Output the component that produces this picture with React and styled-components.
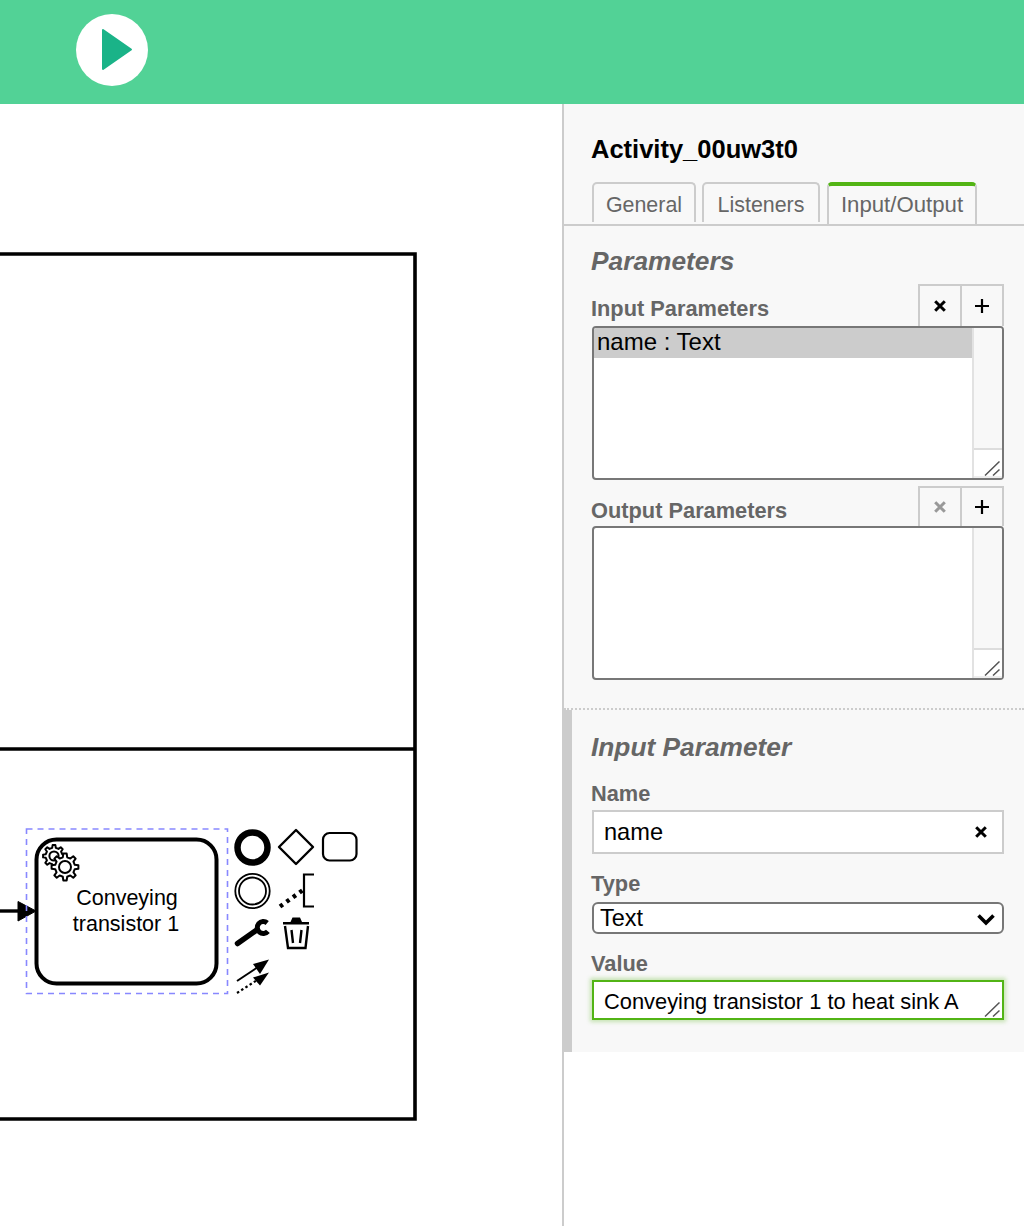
import React from "react";
import styled, { createGlobalStyle } from "styled-components";

const Global = createGlobalStyle`
  html, body { margin: 0; padding: 0; background: #fff; }
  body { font-family: "Liberation Sans", Arial, sans-serif; overflow: hidden; }
  * { box-sizing: border-box; }
`;

const Page = styled.div`
  width: 1024px;
  height: 1226px;
  display: flex;
  flex-direction: column;
  overflow: hidden;
`;

const TopBar = styled.header`
  height: 104px;
  flex: none;
  background: #52d296;
  display: flex;
  align-items: center;
  padding: 0 0 4px 76px;
`;

const PlayButton = styled.button`
  width: 72px;
  height: 72px;
  border: 0;
  padding: 0 0 0 9px;
  border-radius: 50%;
  background: #fff;
  display: flex;
  align-items: center;
  justify-content: center;
`;

const Main = styled.div`
  flex: 1;
  display: flex;
  min-height: 0;
`;

const Canvas = styled.main`
  width: 562px;
  flex: none;
  background: #fff;
`;

const DiagramSvg = styled.svg`
  display: block;
  width: 562px;
  height: 1122px;
`;

const Panel = styled.aside`
  flex: 1;
  border-left: 2px solid #ccc;
  background: #fff;
`;

const PanelBody = styled.div`
  background: #f8f8f8;
`;

const PanelHeader = styled.div`
  padding-top: 30px;
`;

const Title = styled.div`
  margin-left: 27px;
  font-size: 25.5px;
  line-height: 30px;
  font-weight: 700;
  color: #000;
`;

const Tabs = styled.nav`
  margin-top: 18px;
  height: 44px;
  padding-left: 28px;
  display: flex;
  align-items: flex-start;
  gap: 6px;
  border-bottom: 2px solid #ccc;
`;

const Tab = styled.div`
  height: ${(p) => (p.$active ? "42px" : "40px")};
  width: ${(p) => p.$w}px;
  margin-left: ${(p) => (p.$active ? "1px" : "0")};
  border: 2px solid #ccc;
  border-top: ${(p) => (p.$active ? "4px solid #52b415" : "2px solid #ccc")};
  border-bottom: 0;
  border-radius: 5px 5px 0 0;
  display: flex;
  align-items: center;
  justify-content: center;
  padding: ${(p) => (p.$active ? "0 0 1px" : "4px 0 0")};
  font-size: ${(p) => (p.$active ? "22.2px" : "21.4px")};
  color: #666;
`;

const Group = styled.section`
  padding: 20px 20px 28px 28px;
  border-bottom: 2px dotted #ccc;
`;

const GroupHeading = styled.h2`
  margin: 0 0 0 -1px;
  font-size: 26.3px;
  line-height: 30px;
  font-weight: 700;
  font-style: italic;
  color: #666;
`;

const ListField = styled.div`
  margin-top: ${(p) => p.$top}px;
`;

const ListHeader = styled.div`
  display: flex;
  align-items: flex-end;
  justify-content: space-between;
`;

const Label = styled.label`
  display: block;
  margin-left: -1px;
  font-size: 21.8px;
  line-height: 26px;
  font-weight: 700;
  color: #666;
`;

const ListLabel = styled(Label)`
  margin-bottom: ${(p) => p.$gap}px;
`;

const ButtonPair = styled.div`
  display: flex;
`;

const IconButton = styled.button`
  width: 44px;
  height: ${(p) => p.$h}px;
  padding: 0;
  margin-left: ${(p) => (p.$first ? "0" : "-2px")};
  background: #f8f8f8;
  border: 2px solid #ccc;
  border-bottom: 0;
  display: flex;
  align-items: center;
  justify-content: center;
  color: ${(p) => (p.$muted ? "#999" : "#000")};
`;

const ListBox = styled.div`
  height: 154px;
  border: 2px solid #777;
  border-radius: 4px;
  background: #fff;
  display: flex;
  overflow: hidden;
`;

const Rows = styled.div`
  flex: 1;
  min-width: 0;
`;

const Row = styled.div`
  height: 30px;
  padding-left: 3px;
  font-size: 24px;
  line-height: 28px;
  color: #000;
  background: #ccc;
`;

const ScrollTrack = styled.div`
  width: 30px;
  flex: none;
  background: #f8f8f8;
  border-left: 2px solid #e2e2e2;
  display: flex;
  flex-direction: column;
  justify-content: flex-end;
`;

const ResizeCorner = styled.div`
  height: 30px;
  background: #fff;
  border-top: 2px solid #ddd;
  border-bottom: 2px solid #eee;
  display: flex;
  align-items: flex-end;
  justify-content: flex-end;
  padding: 0 2px 0 0;
`;

const DetailGroup = styled.section`
  border-left: 8px solid #ccc;
  padding: 22px 20px 32px 20px;
`;

const DetailHeading = styled(GroupHeading)``;

const FieldLabel = styled(Label)`
  margin-top: ${(p) => p.$top}px;
  margin-bottom: ${(p) => p.$bottom}px;
`;

const TextWrap = styled.div`
  position: relative;
`;

const NameInput = styled.input`
  display: block;
  width: 100%;
  height: 44px;
  border: 2px solid #ccc;
  background: #fff;
  padding: 0 40px 0 10px;
  font: 23.6px "Liberation Sans", Arial, sans-serif;
  color: #000;
  outline: none;
  border-radius: 0;
`;

const ClearIcon = styled.span`
  position: absolute;
  right: 17px;
  top: 16px;
  display: flex;
`;

const TypeSelect = styled.select`
  display: block;
  width: 100%;
  height: 32px;
  border: 2px solid #777;
  border-radius: 6px;
  background: #fff;
  padding: 0 30px 0 6px;
  font: 23.5px "Liberation Sans", Arial, sans-serif;
  color: #000;
  appearance: none;
  outline: none;
`;

const Chevron = styled.svg`
  position: absolute;
  right: 8px;
  top: 11px;
  pointer-events: none;
`;

const ValueBox = styled.textarea`
  display: block;
  width: 100%;
  height: 40px;
  border: 2px solid #52b415;
  box-shadow: 0 0 4px 2px rgba(82, 180, 21, 0.3);
  background: #fff;
  padding: 6px 30px 0 10px;
  font: 21.85px/27px "Liberation Sans", Arial, sans-serif;
  color: #000;
  outline: none;
  resize: none;
  overflow: hidden;
  border-radius: 0;
`;

const HandleSlot = styled.span`
  position: absolute;
  right: 4px;
  bottom: 3px;
  display: flex;
`;

function Handle() {
  return (
    <svg width="16" height="15" viewBox="0 0 16 15">
      <path d="M1 14.5 L15.5 0.5 M9 14.5 L15.5 8.5" stroke="#555" strokeWidth="1.5" fill="none" />
    </svg>
  );
}

function CrossIcon() {
  return (
    <svg width="12" height="12" viewBox="0 0 12 12">
      <path d="M1.2 1.2 L10.8 10.8 M10.8 1.2 L1.2 10.8" stroke="currentColor" strokeWidth="3" fill="none" />
    </svg>
  );
}

function PlusIcon() {
  return (
    <svg width="14" height="14" viewBox="0 0 14 14">
      <path d="M7 0 V14 M0 7 H14" stroke="currentColor" strokeWidth="2.2" fill="none" />
    </svg>
  );
}

function gearPath(cx, cy, outer, root, teeth) {
  const pts = [];
  const step = (Math.PI * 2) / teeth;
  for (let i = 0; i < teeth; i++) {
    const a = i * step - Math.PI / 2;
    const w = step * 0.2;
    const p = (r, t) => `${(cx + r * Math.cos(t)).toFixed(2)} ${(cy + r * Math.sin(t)).toFixed(2)}`;
    pts.push(p(root, a - w * 1.4), p(outer, a - w * 0.8), p(outer, a + w * 0.8), p(root, a + w * 1.4));
  }
  return `M${pts.join(" L")} Z`;
}

function Diagram() {
  return (
    <DiagramSvg viewBox="0 104 562 1122">
      <g fill="none" stroke="#000">
        <path d="M-10 254 H415 V1119 H-10" strokeWidth="3.6" />
        <path d="M-10 749 H415" strokeWidth="3.6" />
        <path d="M-10 911 H22" strokeWidth="3.4" />
      </g>
      <path d="M18 901.5 L36 911 L18 921 Z" fill="#000" stroke="#000" strokeWidth="1" />
      <rect x="26.5" y="829" width="201" height="164.5" fill="none" stroke="#8888ff" strokeWidth="1.6" strokeDasharray="6 5" />
      <rect x="36.5" y="839.5" width="180" height="144" rx="20" fill="#fff" stroke="#000" strokeWidth="4" />
      <path d={gearPath(54, 856, 11, 8.4, 8)} fill="#fff" stroke="#000" strokeWidth="2" strokeLinejoin="round" />
      <circle cx="54" cy="856" r="4.6" fill="#fff" stroke="#000" strokeWidth="2" />
      <path d={gearPath(65, 867, 13.5, 10, 8)} fill="#fff" stroke="#000" strokeWidth="2" strokeLinejoin="round" />
      <circle cx="65" cy="867" r="6" fill="#fff" stroke="#000" strokeWidth="2" />
      <text x="127" y="905" textAnchor="middle" fontFamily="'Liberation Sans', Arial, sans-serif" fontSize="21.5" fill="#000">Conveying</text>
      <text x="126" y="931" textAnchor="middle" fontFamily="'Liberation Sans', Arial, sans-serif" fontSize="21.5" fill="#000">transistor 1</text>

      <circle cx="252.5" cy="847.5" r="15" fill="none" stroke="#000" strokeWidth="6.5" />
      <path d="M296 830 L313 847 L296 864 L279 847 Z" fill="none" stroke="#000" strokeWidth="2.4" strokeLinejoin="round" />
      <rect x="323" y="833" width="33.5" height="27.5" rx="6.5" fill="none" stroke="#000" strokeWidth="2.2" />
      <circle cx="252.5" cy="891" r="17.2" fill="none" stroke="#000" strokeWidth="1.8" />
      <circle cx="252.5" cy="891" r="13.5" fill="none" stroke="#000" strokeWidth="1.8" />
      <path d="M280 906.5 L303 890" fill="none" stroke="#000" strokeWidth="4.4" strokeDasharray="3.5 4.5" />
      <path d="M314 874.5 H304 V906.5 H314" fill="none" stroke="#000" strokeWidth="2.2" />
      <path d="M237.5 943.5 L256 930.5" fill="none" stroke="#000" strokeWidth="5.5" strokeLinecap="round" />
      <path d="M267.2 923 A6 6 0 1 0 267.9 931.4" fill="none" stroke="#000" strokeWidth="5" />
      <path d="M290.5 922 L292.5 917.5 H300 L302 922 H309 V924.5 H283 V922 Z" fill="#000" />
      <path d="M285 926 L288 948 H305.5 L308 926" fill="none" stroke="#000" strokeWidth="2.4" />
      <path d="M291.5 930 L293 943 M301.5 930 L300 943" fill="none" stroke="#000" strokeWidth="2.4" />
      <path d="M237 981 L258 967" fill="none" stroke="#000" strokeWidth="2" />
      <path d="M269 959.5 L253 964 L260 974 Z" fill="#000" />
      <path d="M237 993 L258 979.5" fill="none" stroke="#000" strokeWidth="2.2" strokeDasharray="2.5 2.5" />
      <path d="M269 972.5 L253 977.5 L260 985.5 Z" fill="#000" />
    </DiagramSvg>
  );
}

function ParamList({ label, top, buttonHeight, labelGap, muted, children }) {
  return (
    <ListField $top={top}>
      <ListHeader>
        <ListLabel $gap={labelGap}>{label}</ListLabel>
        <ButtonPair>
          <IconButton $first $h={buttonHeight} $muted={muted} aria-label="Remove">
            <CrossIcon />
          </IconButton>
          <IconButton $h={buttonHeight} aria-label="Add">
            <PlusIcon />
          </IconButton>
        </ButtonPair>
      </ListHeader>
      <ListBox>
        <Rows>{children}</Rows>
        <ScrollTrack>
          <ResizeCorner>
            <Handle />
          </ResizeCorner>
        </ScrollTrack>
      </ListBox>
    </ListField>
  );
}

export default function App() {
  return (
    <>
      <Global />
      <Page>
        <TopBar>
          <PlayButton aria-label="Run">
            <svg width="32" height="44" viewBox="0 0 32 44">
              <path d="M2 2 L30 21.5 L2 41 Z" fill="#1ab388" stroke="#1ab388" strokeWidth="2" strokeLinejoin="round" />
            </svg>
          </PlayButton>
        </TopBar>
        <Main>
          <Canvas>
            <Diagram />
          </Canvas>
          <Panel>
            <PanelBody>
              <PanelHeader>
                <Title>Activity_00uw3t0</Title>
                <Tabs>
                  <Tab $w={104}>General</Tab>
                  <Tab $w={118}>Listeners</Tab>
                  <Tab $w={150} $active>Input/Output</Tab>
                </Tabs>
              </PanelHeader>
              <Group>
                <GroupHeading>Parameters</GroupHeading>
                <ParamList label="Input Parameters" top={8} buttonHeight={42} labelGap={4}>
                  <Row>name : Text</Row>
                </ParamList>
                <ParamList label="Output Parameters" top={6} buttonHeight={40} labelGap={2} muted />
              </Group>
              <DetailGroup>
                <DetailHeading>Input Parameter</DetailHeading>
                <FieldLabel $top={19} $bottom={3}>Name</FieldLabel>
                <TextWrap>
                  <NameInput readOnly value="name" />
                  <ClearIcon>
                    <CrossIcon />
                  </ClearIcon>
                </TextWrap>
                <FieldLabel $top={17} $bottom={5}>Type</FieldLabel>
                <TextWrap>
                  <TypeSelect defaultValue="Text">
                    <option>Text</option>
                    <option>Script</option>
                    <option>List</option>
                    <option>Map</option>
                  </TypeSelect>
                  <Chevron width="20" height="14" viewBox="0 0 20 14">
                    <path d="M2.5 2.5 L10 10 L17.5 2.5" fill="none" stroke="#000" strokeWidth="3.6" />
                  </Chevron>
                </TextWrap>
                <FieldLabel $top={17} $bottom={3}>Value</FieldLabel>
                <TextWrap>
                  <ValueBox readOnly value="Conveying transistor 1 to heat sink A" />
                  <HandleSlot>
                    <Handle />
                  </HandleSlot>
                </TextWrap>
              </DetailGroup>
            </PanelBody>
          </Panel>
        </Main>
      </Page>
    </>
  );
}
